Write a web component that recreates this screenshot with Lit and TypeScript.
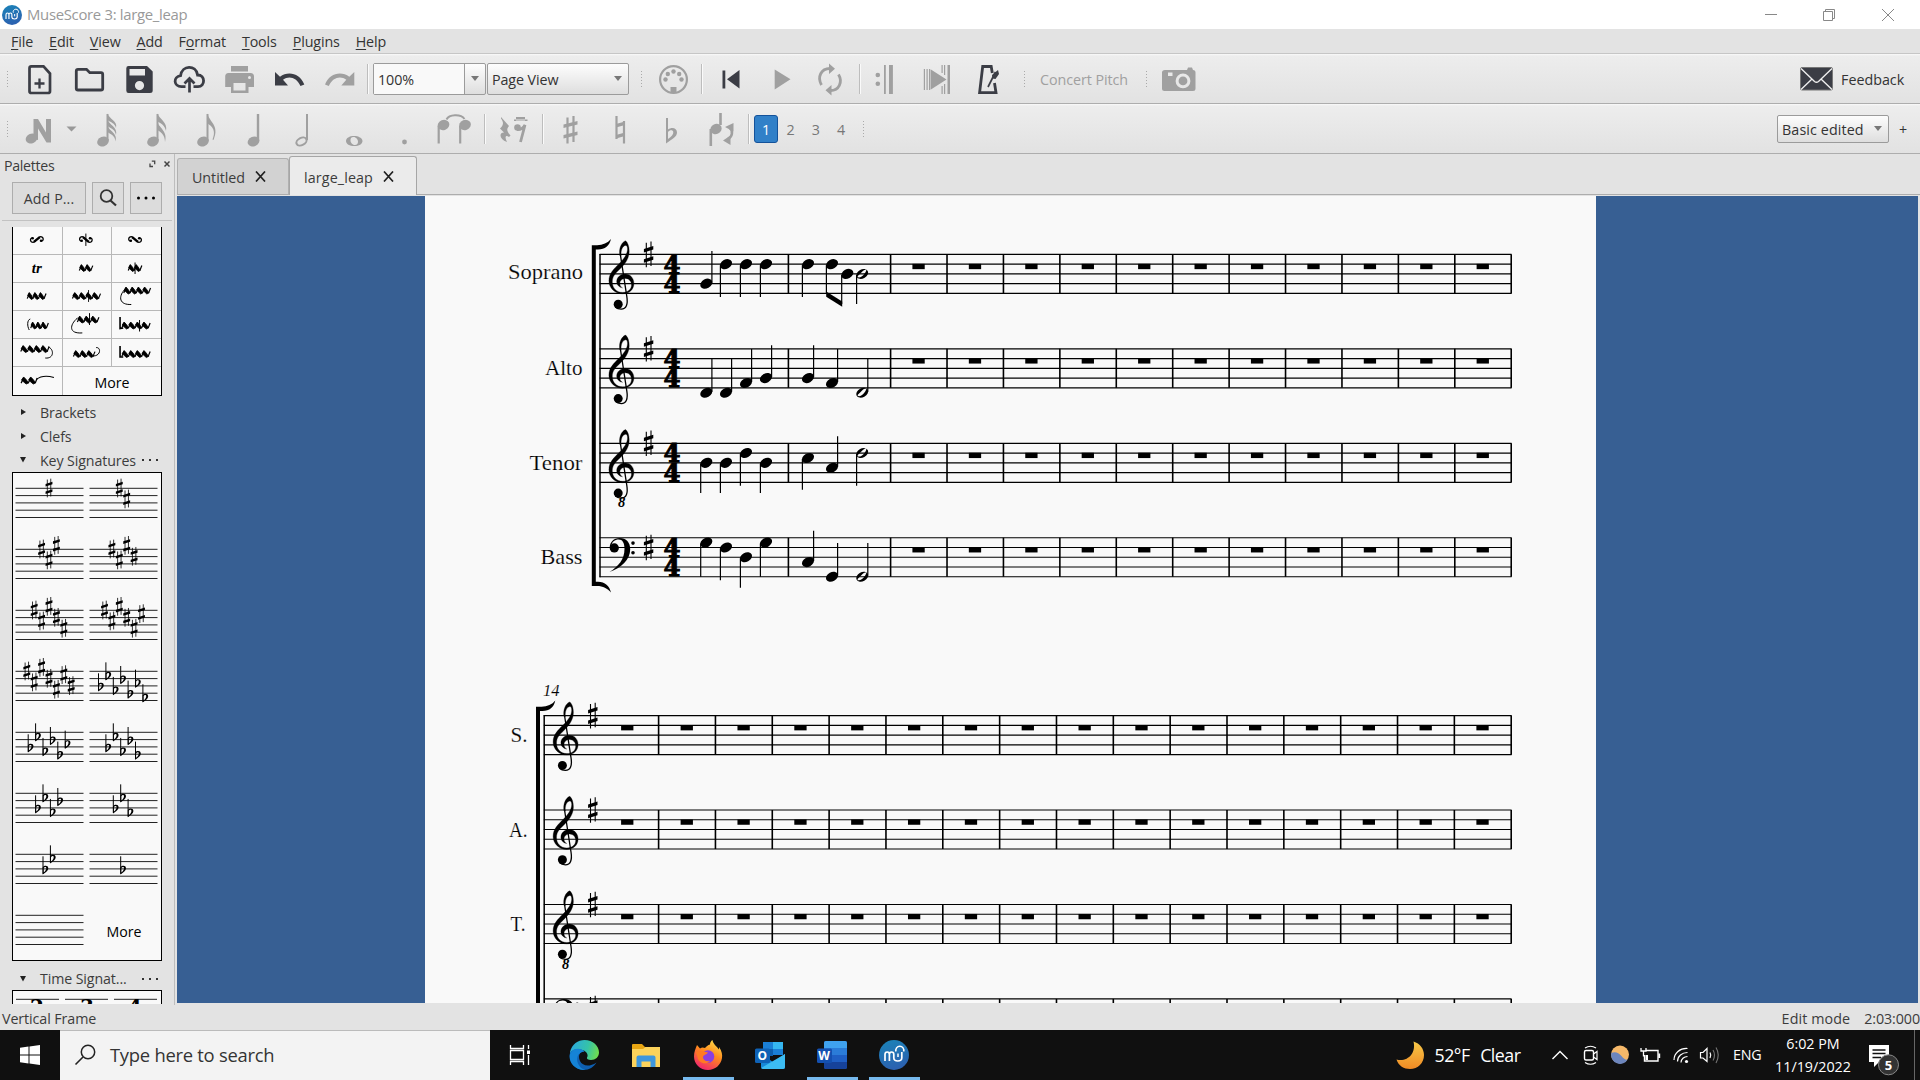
import { LitElement, html, svg, css } from "lit";
import { customElement } from "lit/decorators.js";

const DARK = "#3b3d45";
const GREY = "#a0a0a0";

const icon = (w: number, h: number, content: unknown) =>
  html`<svg class="ic" width=${w} height=${h} viewBox="0 0 ${w} ${h}">${content}</svg>`;
const slot = (content: unknown) => icon(50, 49, content);
const grip = () => html`<span class="grip"></span>`;
const sep = () => html`<span class="sep"></span>`;

/* ---------- music glyphs ---------- */

const sharp = (x: number, y: number, k = 1) => svg`<g transform="translate(${x} ${y}) scale(${k})">
  <path d="M-2.3 -11.6V12.8M2.4 -12.8V11.6" stroke="#000" stroke-width="1.1"/>
  <path d="M-4.7 -3.9L4.7 -6.9V-3.4L-4.7 -.4zM-4.7 6.4L4.7 3.4V6.9L-4.7 9.9z" transform="translate(0 -1.6)"/></g>`;

const flat = (x: number, y: number) => svg`<g transform="translate(${x} ${y})">
  <path d="M-2.3 -12.6V5" stroke="#000" stroke-width="1" fill="none"/>
  <path fill-rule="evenodd" d="M-2.6 -1.6C-.8 -3.8 3 -3.6 3 -.6C3 2 .4 3.6 -2.6 5.6zM-1.7 -.8V3.6C.2 2.2 1 .8 1 -.6C1 -2.4 -.8 -2.2 -1.7 -.8z"/></g>`;

const treble = (x: number, y: number, eight = false) => svg`<g transform="translate(${x} ${y})">
  <path d="M10.9 1C9.8 -5 12 -12 16.7 -13.7C18.8 -12 20.4 -8 20.3 -3C20.2 3.5 17 8.6 12.5 13.2C7 18.6 3.4 21.6 3.4 27.5C3.4 33.5 7.5 38 13.8 38C19 38 22.6 34.8 22.6 30.6C22.6 26.8 20 24 16.4 24C13.2 24 10.9 26.2 10.9 29C10.9 31.2 12 32.4 13.6 33.5C10.5 33.2 7.8 30.6 7.8 27.2C7.8 22.8 11.6 19.6 16.2 19.6C21.4 19.6 25 23.8 25 29C25 35 20.4 39.4 13.6 39.4C6 39.4 0 33.6 0 26.4C0 19 5 14.5 10 9.5C15 4.5 18.6 -.5 18.6 -5.4C18.6 -7.8 17.8 -9.2 16.6 -9C13.5 -8.4 11.7 -4 12.3 1z" stroke="#000" stroke-width=".3"/>
  <path d="M11.5 .4L17.9 42C19.2 50 17.4 54.8 12.3 54.8C10 54.8 8 54.2 6.4 52.6" fill="none" stroke="#000" stroke-width="1.3"/>
  <circle cx="9.3" cy="49.8" r="4.5"/>
  ${eight ? svg`<text x="9" y="64.2" class="oct">8</text>` : null}</g>`;

const bass = (x: number, y: number) => svg`<g transform="translate(${x} ${y})">
  <circle cx="5.1" cy="10.2" r="4.6"/>
  <path d="M.5 10C.6 4.2 4.6 .2 10.5 .2C17 .2 21 4.6 21 11.5C21 22 12 30 .3 34.4C9 28.6 15.3 22 15.3 11C15.3 5 13.3 1.7 9.5 1.7C5.5 1.7 2.6 4 2.2 8z"/>
  <circle cx="23.8" cy="5.4" r="1.8"/><circle cx="23.8" cy="15" r="1.8"/></g>`;

const SP = 9.76;

interface Note { x: number; pos: number; end: number; half?: boolean }

const note = (top: number, n: Note) => {
  const y = top + n.pos * SP;
  const up = n.end < y;
  const sx = up ? n.x + 5.6 : n.x - 5.6;
  return svg`<line x1=${sx} x2=${sx} y1=${y + (up ? -1 : 1)} y2=${n.end} stroke="#000" stroke-width="1.2"/>
  <g transform="translate(${n.x} ${y}) rotate(-28)">${n.half
    ? svg`<path fill-rule="evenodd" d="M-6.3 0A6.3 4.5 0 1 1 6.3 0A6.3 4.5 0 1 1 -6.3 0zM-5.4 .4C-5 2.6 -1 2.2 1.5 1.2C4 .2 5.8 -1.2 5.4 -1.8C4.6 -3 1.5 -2.4 -1 -1.4C-3.6 -.4 -5.4 -.4 -5.4 .4z"/>`
    : svg`<ellipse rx="6.4" ry="4.6"/>`}</g>`;
};

interface Staff { name: string; nx: number; nw: number; ny: number; clef: "t" | "8" | "b"; top: number; notes?: Note[] }

const FIRST: Staff[] = [
  { name: "Soprano", nx: 508, nw: 75, ny: 279.3, clef: "t", top: 254.4, notes: [
    { x: 706.3, pos: 3, end: 251 }, { x: 726, pos: 1, end: 297 }, { x: 746, pos: 1, end: 297 }, { x: 766, pos: 1, end: 297 },
    { x: 808, pos: 1, end: 297 }, { x: 832, pos: 1, end: 294 }, { x: 847.3, pos: 2, end: 304 }, { x: 862.2, pos: 2, end: 304, half: true } ] },
  { name: "Alto", nx: 545, nw: 37.5, ny: 374.7, clef: "t", top: 348.8, notes: [
    { x: 706.3, pos: 4.5, end: 358.7 }, { x: 726, pos: 4.5, end: 358.7 }, { x: 746, pos: 3.5, end: 349 }, { x: 766, pos: 3, end: 345.3 },
    { x: 808, pos: 3, end: 345.3 }, { x: 832, pos: 3.5, end: 349 }, { x: 862.2, pos: 4.5, end: 358.7, half: true } ] },
  { name: "Tenor", nx: 529.5, nw: 53, ny: 470, clef: "8", top: 443.3, notes: [
    { x: 706.3, pos: 2, end: 493 }, { x: 726, pos: 2, end: 493 }, { x: 746, pos: 1, end: 485.7 }, { x: 766, pos: 2, end: 493 },
    { x: 808, pos: 1.5, end: 489.7 }, { x: 832, pos: 2.5, end: 436.3 }, { x: 862.2, pos: 1, end: 485.7, half: true } ] },
  { name: "Bass", nx: 540.5, nw: 42, ny: 564, clef: "b", top: 537.7, notes: [
    { x: 706.3, pos: 0.5, end: 576.7 }, { x: 726, pos: 1, end: 580.3 }, { x: 746, pos: 2, end: 587.7 }, { x: 766, pos: 0.5, end: 576.7 },
    { x: 808, pos: 2.5, end: 530.7 }, { x: 832, pos: 4, end: 543 }, { x: 862.2, pos: 4, end: 543, half: true } ] },
];

const SECOND: Staff[] = [
  { name: "S.", nx: 510.5, nw: 17, ny: 741.7, clef: "t", top: 715.6 },
  { name: "A.", nx: 509, nw: 18.5, ny: 837, clef: "t", top: 810 },
  { name: "T.", nx: 510.5, nw: 15, ny: 931, clef: "8", top: 904.5 },
  { name: "", nx: 510.5, nw: 17, ny: 1026, clef: "b", top: 998.9 },
];

const staff = (s: Staff, left: number, bars: number[], rests: number[]) => svg`
  ${[0, 1, 2, 3, 4].map(i => svg`<line x1=${left} x2="1511.6" y1=${s.top + i * SP} y2=${s.top + i * SP} stroke="#000" stroke-width="1.15"/>`)}
  ${bars.map(b => svg`<line x1=${b} x2=${b} y1=${s.top} y2=${s.top + 4 * SP} stroke="#000" stroke-width="1.6"/>`)}
  ${rests.map(r => svg`<rect x=${r - 6.4} y=${s.top + SP - 0.3} width="12.3" height="5.3"/>`)}
  ${s.name ? svg`<text class="part" x=${s.nx} y=${s.ny} textLength=${s.nw} lengthAdjust="spacingAndGlyphs">${s.name}</text>` : null}
  ${s.clef === "b" ? bass(left + 9.6, s.top) : treble(left + 9.3, s.top, s.clef === "8")}
  ${sharp(left + 49, s.clef === "b" ? s.top + SP : s.top)}
  ${s.notes ? svg`
    <text class="meter" x="663.6" y=${s.top + 2 * SP - 0.4} textLength="17" lengthAdjust="spacingAndGlyphs">4</text>
    <text class="meter" x="663.6" y=${s.top + 4 * SP - 0.4} textLength="17" lengthAdjust="spacingAndGlyphs">4</text>
    ${s.notes.map(n => note(s.top, n))}` : null}`;

const mids = (b: number[]) => b.slice(0, -1).map((v, i) => (v + b[i + 1]) / 2);
const BARS1 = [788.4, ...Array.from({ length: 12 }, (_, i) => 890.6 + i * 56.42)];
const RESTS1 = mids(BARS1.slice(1));
const BARS2 = Array.from({ length: 16 }, (_, i) => 658.6 + i * 56.84);
const RESTS2 = [627.5, ...mids(BARS2)];

@customElement("score-canvas")
class ScoreCanvas extends LitElement {
  static styles = css`
    :host { display: block; width: 1741px; height: 807px; }
    svg { display: block; }
    .part { font: 20.8px "Liberation Serif", serif; stroke: #f9f9f9; stroke-width: .18px; }
    .num { font: italic 16.8px "Liberation Serif", serif; stroke: #f9f9f9; stroke-width: .1px; }
    .meter { font: bold 26px "DejaVu Serif", serif; stroke: #000; stroke-width: 1px; }
    .oct { font: italic bold 14.5px "Liberation Serif", serif; }
  `;
  render() {
    return html`<svg width="1741" height="807" viewBox="177 196 1741 807">
      <rect x="177" y="196" width="1741" height="807" fill="#375f93"/>
      <rect x="425" y="196" width="1171" height="807" fill="#f9f9f9"/>
      ${FIRST.map(s => staff(s, 599.6, BARS1, RESTS1))}
      <path d="M826.2 291.5L842.2 301.5V306.8L826.2 296.8z"/>
      <path d="M600 254V577.2" stroke="#000" stroke-width="1.5"/>
      <path d="M591.8 245.2H597C603 245 607.5 243 611 239C609.5 245.5 605 249.5 598 249.5H595.8V581.7H598C605 581.7 609.5 586 611 592.5C607.5 588.5 603 586 597 586H591.8z"/>
      ${SECOND.map(s => staff(s, 543.8, BARS2, RESTS2))}
      <path d="M544.2 715V1003" stroke="#000" stroke-width="1.5"/>
      <path d="M536 706.8H541.5C547.5 706.6 552 704.5 555.3 700.5C554 707 549.5 711 542.5 711H540V1003H536z"/>
      <text class="num" x="543" y="696" textLength="16.5" lengthAdjust="spacingAndGlyphs">14</text>
    </svg>`;
  }
}

/* ---------- palettes ---------- */

const wave = (x: number, y: number, n: number, w = 6.6) => svg`${Array.from({ length: n }, (_, i) => {
  const a = x + i * w;
  return svg`<path d="M${a} ${y + 2.6}L${a + w * 0.38} ${y - 2.8}" stroke="#000" stroke-width="1.2"/>
  <path d="M${a + w * 0.36} ${y - 3.5}L${a + w * 0.72} ${y - 0.9}L${a + w * 1.06} ${y + 2.4}L${a + w * 0.72} ${y + 3.5}L${a + w * 0.06} ${y - 0.4}z" stroke="#000" stroke-width=".8"/>`;
})}<path d="M${x + n * w} ${y + 2.4}L${x + n * w + 2} ${y - 2.4}" stroke="#000" stroke-width="1.2"/>`;
const curve = (d: string, w = 1) => svg`<path d=${d} fill="none" stroke="#000" stroke-width=${w}/>`;
const turn = (x: number, flip = false) => svg`<g transform="translate(${x} 239.5) scale(${flip ? -1 : 1} 1)">
  ${curve("M-4.3 1.6C-7.4 1.4 -6.8 -2.9 -3.6 -2.9C-.8 -2.9 .8 2.9 3.6 2.9C6.8 2.9 7.4 -1.4 4.3 -1.6", 1.3)}
  ${curve("M-3 -2.4L3 2.4", 2.3)}
  <circle cx="-4.2" cy="1.2" r="1.3"/><circle cx="4.2" cy="-1.2" r="1.3"/></g>`;

const ORNAMENTS: unknown[] = [
  turn(36.6, true), svg`${turn(85.6)}${curve("M85.6 233.5V246", 1)}`, turn(134.8),
  svg`<text class="tr" x="31.5" y="273">tr</text>`, wave(79, 268, 2, 5.8), svg`${wave(128, 268, 2, 5.8)}${curve("M134.8 262.5V274", 1)}`,
  wave(27, 296, 3, 5.6), svg`${wave(72, 296, 4)}${curve("M88.3 290V302", 0.9)}`, svg`${wave(123.5, 290.5, 4, 6.2)}${curve("M124 290C118 297 119 305 131 304.5")}`,
  svg`${wave(30.5, 325.5, 3, 5.2)}${curve("M30 319C26.8 320 26.8 326 29 330")}`, svg`${wave(77, 319.5, 3)}${curve("M77 318C69 325 68 334 82 333")}${curve("M89.3 313V325")}`, svg`${wave(121.5, 325.5, 4)}${curve("M119.8 317V328.5L123 328", 1.6)}${curve("M139.3 320V331.5")}`,
  svg`${wave(20.5, 349, 4)}${curve("M48 347C54 349 54 359 45 358")}`, svg`${wave(73, 354, 3)}${curve("M93 356C101 356 101 347 96 347.5")}`, svg`${wave(121.5, 354, 4)}${curve("M119.8 346V357L123 357", 1.6)}`,
  svg`${wave(21, 380, 2, 7)}${curve("M36 379C41 375 47 375 53.5 377", 1)}`,
];

const SHARP_POS = [0, 1.5, -0.5, 1, 2.5, 0.5, 2];
const FLAT_POS = [2, 0.5, 2.5, 1, 3, 1.5, 3.5];
const KEYS = [1, 2, 3, 4, 5, 6, 7, -7, -6, -5, -4, -3, -2, -1, 0];

const keySig = (k: number) => {
  const n = Math.abs(k);
  return html`<svg class="key" width="74" height="60" viewBox="0 0 74 60">
    ${[0, 1, 2, 3, 4].map(i => svg`<line x1="2.5" x2="70.5" y1=${15.3 + i * 7.3} y2=${15.3 + i * 7.3} stroke="#222" stroke-width="1"/>`)}
    ${Array.from({ length: n }, (_, i) => {
      const x = 36 + (i - (n - 1) / 2) * 7.4;
      return k > 0 ? sharp(x, 15 + SHARP_POS[i] * 7.3, 0.73) : flat(x, 15.3 + FLAT_POS[i] * 7.3);
    })}
  </svg>`;
};

@customElement("palette-panel")
class PalettePanel extends LitElement {
  static styles = css`
    :host { display: flex; flex-direction: column; width: 174px; height: 851px; overflow: hidden; font: 14.2px "Open Sans", sans-serif; color: #3c3c3c; border-right: 1px solid #bdbdbd; }
    :host > * { flex: none; }
    svg { display: block; }
    .head { display: flex; align-items: center; height: 22px; padding: 0 4px 0 4px; letter-spacing: -.3px; }
    .head span { flex: 1; }
    .head svg { margin-top: -3px; }
    .btns { display: flex; gap: 6px; padding: 6px 12px 0; height: 32px; }
    .btns > span { box-sizing: border-box; height: 32px; border: 1px solid #adadad; background: #dcdcdc; display: flex; align-items: center; justify-content: center; }
    .btns .add { width: 74px; letter-spacing: .1px; padding-top: 1px; }
    .sq { width: 32px; }
    .rule { height: 1px; background: #c2c2c2; margin: 6px 2px; }
    .orn { margin-left: 12px; display: grid; grid-template-columns: 49px 48px 49px; grid-template-rows: repeat(5, 27px) 28px; gap: 1px; border: 1px solid #000; border-top: 0; background: #b8b8b8; height: 168px; width: 148px; }
    .orn > * { background: #f9f9f9; }
    .orn svg { width: 100%; height: 100%; }
    .tr { font: italic bold 15px "Liberation Serif", serif; }
    .more { display: flex; align-items: center; justify-content: center; color: #000; background: #f9f9f9; }
    .orn .more { grid-column: span 2; padding-top: 2px; }
    .keys .more { padding-top: 2px; }
    .cat { display: flex; align-items: center; height: 24px; padding-left: 20px; letter-spacing: -.1px; }
    .cat svg { margin-right: 14px; }
    .cat .dots { margin: 0 16px 0 auto; }
    .gap { height: 4px; }
    .keys { width: 148px; height: 487px; margin-left: 12px; border: 1px solid #000; background: #f9f9f9; display: grid; grid-template-columns: 74px 74px; grid-template-rows: repeat(7, 61px) 60px; }
    .sigs { width: 148px; height: 13px; margin: -1px 0 0 12px; border: 1px solid #000; border-bottom: 0; background: #f9f9f9; overflow: hidden; }
    .sig { font: bold 20px "DejaVu Serif", serif; }
    .time { height: 30px; box-sizing: border-box; padding-top: 5px; }
  `;
  private dots() { return html`<svg class="dots" width="16" height="4" viewBox="0 0 16 4"><path d="M0 1h2v2H0zM7 1h2v2H7zM14 1h2v2h-2z" fill="#333"/></svg>`; }
  private arrow(open: boolean) { return html`<svg width="6" height="8" viewBox="0 0 6 8"><path d=${open ? "M0 1H6L3 6.5z" : "M1 1V7L6 4z"} fill="#222"/></svg>`; }
  render() {
    return html`
      <div class="head"><span>Palettes</span>
        <svg width="21" height="8" viewBox="0 0 21 8"><path d="M2.8 1.2H5.7V4.2M4 6.5H1V3.5" stroke="#444" stroke-width="1.3" fill="none"/><path d="M15.5 1.5l5 5m0-5l-5 5" stroke="#444" stroke-width="1.5"/></svg>
      </div>
      <div class="btns"><span class="add">Add P...</span>
        <span class="sq"><svg width="20" height="20" viewBox="0 0 20 20"><circle cx="8.5" cy="8" r="5.8" fill="none" stroke="#333" stroke-width="1.8"/><path d="M12.5 12.5L18 17.5" stroke="#333" stroke-width="2.2"/></svg></span>
        <span class="sq"><svg width="20" height="4" viewBox="0 0 20 4"><circle cx="2.5" cy="2" r="1.5"/><circle cx="10" cy="2" r="1.5"/><circle cx="17.5" cy="2" r="1.5"/></svg></span>
      </div>
      <div class="rule"></div>
      <div class="orn">
        ${ORNAMENTS.map((o, i) => html`<svg viewBox="${13 + (i % 3) * 49.5} ${227 + Math.floor(i / 3) * 28} 48.5 27">${o}</svg>`)}
        <div class="more">More</div>
      </div>
      <div class="gap"></div>
      <div class="cat">${this.arrow(false)}Brackets</div>
      <div class="cat">${this.arrow(false)}Clefs</div>
      <div class="cat">${this.arrow(true)}Key Signatures${this.dots()}</div>
      <div class="keys">${KEYS.map(keySig)}<div class="more">More</div></div>
      <div class="cat time">${this.arrow(true)}Time Signat...${this.dots()}</div>
      <div class="sigs"><svg width="148" height="40" viewBox="13 991 148 40">
        ${[16, 65, 114].map(x => svg`<path d="M${x} 999.3h43" stroke="#222" stroke-width="1"/>`)}
        <text class="sig" x="30" y="1014" textLength="12">2</text><text class="sig" x="80" y="1014" textLength="12">3</text><text class="sig" x="128" y="1014" textLength="12">4</text>
      </svg></div>`;
  }
}

/* ---------- toolbars ---------- */

const noteHead = (x: number, y: number) => svg`<ellipse cx=${x} cy=${y} rx="6" ry="4.8" transform="rotate(-22 ${x} ${y})" fill=${GREY}/>`;
const g = (d: string, w = 2) => svg`<path d=${d} fill="none" stroke=${GREY} stroke-width=${w}/>`;
const f = (d: string, c = GREY) => svg`<path fill-rule="evenodd" d=${d} fill=${c}/>`;

const FILE_ICONS = [
  svg`<path d="M16.5 12.3H29.5L36 19.5V37.2Q36 39 34 39H17.5Q15.5 39 15.5 37.2V14.2Q15.5 12.3 17.5 12.3z" fill="none" stroke=${DARK} stroke-width="2.7"/><path d="M25.5 24.5V34.5M20.5 29.5H30.5" stroke=${DARK} stroke-width="2.3"/>`,
  svg`<path d="M12.3 17.2Q12.3 15.3 14 15.3H22.5L25.8 18.7H37Q38.7 18.7 38.7 20.4V34.5Q38.7 36 37 36H14Q12.3 36 12.3 34.5z" fill="none" stroke=${DARK} stroke-width="2.8"/>`,
  f("M14.5 12H33L38.7 17.5V36.5Q38.7 39 36 39H14.5Q12.3 39 12.3 36.5V14.2Q12.3 12 14.5 12zM15.5 15V21.5H31V15zM25.5 27A4.6 4.6 0 1 0 25.5 36.2A4.6 4.6 0 1 0 25.5 27z", DARK),
  svg`<path d="M21.5 32.6H17.5C9.5 32.5 8.8 22.8 16.6 21.6C18 10.8 32 10.6 33.6 21C41.5 21 41.5 32.6 34 32.6H29.5" fill="none" stroke=${DARK} stroke-width="2.8"/><path d="M25.5 38.5V25.5M20.5 29.5L25.5 24.5L30.5 29.5" fill="none" stroke=${DARK} stroke-width="2.7"/>`,
  f("M17 12H34V17.5H17zM14.5 19H36.5Q40 19 40 22.5V33H34.5V39H17V33H11.2V22.5Q11.2 19 14.5 19zM19.5 29V36.5H31.5V29zM35.5 22A1.5 1.5 0 1 0 35.5 25A1.5 1.5 0 1 0 35.5 22z"),
  f("M11 18L16 22.7C24 16.5 36 19 40.3 30.5L36.5 32C32.5 23.5 25 21.5 19 25.8L24 31.5H11z", DARK),
  f("M40.3 18L35.3 22.7C27.3 16.5 15.3 19 11 30.5L14.8 32C18.8 23.5 26.3 21.5 32.3 25.8L27.3 31.5H40.3z"),
];

const PLAY1 = [
  svg`<path d="M16.5 16.5h2.8v18h-2.8z" fill=${DARK}/><path d="M33.5 16V34.5L21 25.2z" fill=${DARK}/>`,
  f("M18.7 15.5L34.5 25.3L18.7 35.5z"),
  svg`${g("M15.5 31C11 23 15 14.5 24 14.5M32.5 20.5C37 28 33 36.5 24.5 36.5", 2.8)}${f("M23 9.5L29 14.7L23 20zM25.5 31L19.5 36.3L25.5 41.5z")}`,
];
const PLAY2 = [
  svg`<circle cx="13.8" cy="21" r="2.3" fill=${GREY}/><circle cx="13.8" cy="29.7" r="2.3" fill=${GREY}/>${f("M20 11h1.8v29H20zM25 11h3.9v29H25z")}`,
  f("M9.8 15h1.2v21h-1.2zM12.5 15h1.2v21h-1.2zM15 15h1v21h-1zM16.5 15.3L32.5 25.5L16.5 35.8zM27.5 11h1.2v8h-1.2zM30 11h1.2v10H30zM33.5 11h2.5v29h-2.5zM27.5 32h1.2v8h-1.2zM30 30h1.2v10H30z"),
  svg`<path d="M28.3 19L27.2 12.5H18.7L15.6 38.7H32L30.5 29" fill="none" stroke=${DARK} stroke-width="2.8"/><path d="M24 33L31.5 18" stroke=${DARK} stroke-width="1.7"/><path d="M28 21L34 16L35 20L31.5 25L28.5 24.5z" fill=${DARK}/>`,
];

const DURATIONS = [
  svg`${noteHead(21, 37.5)}${g("M25.5 10V37", 2)}${f("M25.5 9.5C27 15 36 17 34 24C33 19 28 18 25.5 16zM25.5 15.5C27 21 36 23 34 31C33 25 28 24 25.5 22zM25.5 21.5C27 27 36 29 33.5 37.5C33 31 28 30 25.5 28z")}`,
  svg`${noteHead(21, 37.5)}${g("M25.5 10V37", 2)}${f("M25.5 9.5C27 15 36 18 34 27C33 21 28 19 25.5 17.5zM25.5 18C27 24 36 27 33 38C33 30 28 28 25.5 26z")}`,
  svg`${noteHead(21, 37.5)}${g("M25.5 10V37", 2)}${f("M25.5 9.5C27 18 38 21 31.5 36L30.5 35.5C35 25 28 21 25.5 19.5z")}`,
  svg`${noteHead(21.5, 37.5)}${g("M26 10V37", 2.4)}`,
  svg`<ellipse cx="19.5" cy="37.5" rx="5.4" ry="3.6" transform="rotate(-28 19.5 37.5)" fill="none" stroke=${GREY} stroke-width="2"/>${g("M25 10V36", 2)}`,
  svg`${f("M14 37C14 34 17.5 32 22 32S30.5 34 30.5 37S27 42 22.3 42S14 40 14 37zM18.5 36.5C18.5 39 21 41 23 41S26 39.5 26 37.5S24 33 21.5 33S18.5 34.5 18.5 36.5z")}`,
  svg`<circle cx="22.5" cy="38" r="2.4" fill=${GREY}/>`,
  svg`${g("M14.5 15.5C17 10.5 28.5 9.5 32.5 15", 2)}<ellipse cx="11.5" cy="21" rx="6" ry="5" transform="rotate(-22 11.5 21)" fill=${GREY}/><ellipse cx="33" cy="21" rx="6" ry="5" transform="rotate(-22 33 21)" fill=${GREY}/>${g("M6.7 22V39.5M28.2 22V39.5", 2.2)}`,
];
const rest = svg`${f("M13 13L21 22C18.5 25 18.5 27 22.5 31.5L21 33C17.5 30.5 16.5 33 19 38C11.5 35.5 10.5 28.5 16 28.5L12 24.5C15.5 21.5 16 18.5 13 14.5zM28 13h9v3.5h-9zM26 15.5h13.5v1.6H26z")}<circle cx="29.5" cy="23.5" r="3.3" fill=${GREY}/>${g("M29 25.5Q34 26 37 21L32.5 38", 2.8)}`;
const ACCIDENTALS = [
  svg`${g("M21.5 13.5V39.5M27.5 12V38", 2.2)}${f("M17.5 20.5L31.5 17V20.5L17.5 24zM17.5 31L31.5 27.5V31L17.5 34.5z")}`,
  svg`${g("M20.5 12V35M28 17V39.5", 2.2)}${f("M20 20L29 17.5V21L20 23.5zM20 31L29 28.5V32L20 34.5z")}`,
  svg`${f("M20 14H22V25.5C26 22.5 31 24 31 28.5C31 33 26 35 20 39.5zM22 28V35C25.5 32.5 27.5 30.5 27.3 28C27 25.5 23.5 25.5 22 28z")}`,
  svg`<ellipse cx="20" cy="25" rx="5.8" ry="5" transform="rotate(-25 20 25)" fill=${GREY}/>${g("M14.8 25V42M24.5 9V21", 2.6)}${g("M33.5 23.5C37.5 27 36.5 33 31.5 35.5", 2.6)}${f("M29 23L37.5 19V27.5zM27 36.5L34.5 31.5V41z")}`,
];

const drop = () => html`<svg class="drop" width="8" height="5" viewBox="0 0 8 5"><path d="M0 0H8L4 5z" fill="#777"/></svg>`;
const mu = (s: number) => html`<svg width=${s} height=${s} viewBox="0 0 30 30"><defs><linearGradient id="mg" x1="0" y1="0" x2=".3" y2="1"><stop offset="0" stop-color="#1a84b8"/><stop offset="1" stop-color="#2b62b0"/></linearGradient></defs>
  <circle cx="15" cy="15" r="15" fill="url(#mg)"/><path d="M5 21V14.5Q5 12 7.2 12T9.4 14.5V21M9.4 14.5Q9.4 12 11.6 12T13.8 14.5V18Q14 21 17.8 21T21.800 18V12" fill="none" stroke="#fff" stroke-width="1.7" transform="translate(1 0)"/><path d="M19 17V13.5" stroke="#fff" stroke-width="1.5"/><path d="M17 11.5A4 4 0 1 1 24.6 11.5" fill="none" stroke="#fff" stroke-width="1.5"/></svg>`;

@customElement("app-toolbars")
class AppToolbars extends LitElement {
  static styles = css`
    :host { display: block; font: 14.3px "Open Sans", sans-serif; color: #333; }
    svg { display: block; flex: none; }
    .title { height: 29px; background: #fff; display: flex; align-items: center; padding-left: 2px; color: #999; font-size: 14.9px; letter-spacing: -.31px; }
    .title .name { padding: 0 0 2px 5px; flex: 1; }
    .menu { height: 24px; background: #e3e3e3; display: flex; padding-left: 11px; line-height: 25px; border-bottom: 1px solid #c6c6c6; letter-spacing: -.12px; }
    .menu span { margin-right: 15.9px; }
    .menu u { text-underline-offset: 2px; text-decoration-thickness: 1px; }
    .bar { height: 49px; background: linear-gradient(#fafafa 0, #ededed 2px, #e2e2e2); border-bottom: 1px solid #adadad; display: flex; align-items: center; padding-left: 6px; }
    .grip { width: 4px; height: 17px; flex: none; background: radial-gradient(circle, #aaa 0 .7px, transparent .9px) 0 0 / 3px 3px; }
    .sep { width: 1px; height: 30px; flex: none; background: #bdbdbd; border-right: 1px solid #fafafa; margin: 0 3px; }
    .notes .sep { margin: 0 2px; }
    .combo { box-sizing: border-box; border: 1px solid #9b9b9b; border-radius: 2px; background: linear-gradient(#fdfdfd, #dedede); display: flex; align-items: center; flex: none; letter-spacing: -.1px; }
    .zoom { width: 113px; height: 32px; margin: 0 1px 0 1px; }
    .zoom .val { width: 91px; height: 30px; line-height: 29px; box-sizing: border-box; padding-left: 4px; background: #f9f9f9; border-right: 1px solid #9b9b9b; }
    .zoom .drop { margin-left: 6px; }
    .view { width: 142px; height: 32px; padding: 0 6px 0 4px; justify-content: space-between; }
    .ws { width: 112px; height: 28px; padding: 0 6px 0 4px; justify-content: space-between; margin-left: auto; letter-spacing: .1px; }
    .combo span { padding-top: 1px; }
    .file { display: flex; padding-left: 4px; }
    .g1 { display: flex; margin: 0 4px 0 11px; }
    .g2 { margin: 0 13px 0 9px; display: flex; } .g3 { margin: 0 0 0 18px; display: flex; }
    .pitch { color: #a0a0a0; width: 87px; letter-spacing: -.06px; white-space: nowrap; padding-top: 1px; }
    .mail { margin: 0 8px 0 auto; } .fb { width: 79px; padding-top: 1px; }
    .v1 { box-sizing: border-box; width: 24px; height: 28px; border: 1px solid #14529a; border-radius: 3px; background: #3180c8; color: #fff; text-align: center; line-height: 27px; margin-left: 2px; }
    .v { width: 25.2px; text-align: center; color: #777; padding-top: 1px; }
    .plus { width: 31px; text-align: center; box-sizing: border-box; padding: 1px 3px 0 0; }
    .g4 { margin-left: 8px; display: flex; }
  `;
  render() {
    const menus = ["File", "Edit", "View", "Add", "Format", "Tools", "Plugins", "Help"];
    return html`
      <div class="title">${mu(20)}<span class="name">MuseScore 3: large_leap</span>
        <svg width="160" height="28" viewBox="0 0 160 28"><path d="M5 13.5H17M63.5 10.5H72.5V19.5H63.5zM65.5 10V8.5H74.5V17.5H73M122 8l12 12m0-12l-12 12" fill="none" stroke="#888" stroke-width="1"/></svg>
      </div>
      <div class="menu">${menus.map(m => m === "Format" ? html`<span>F<u>o</u>rmat</span>` : html`<span><u>${m[0]}</u>${m.slice(1)}</span>`)}</div>
      <div class="bar">${grip()}<span class="file">${FILE_ICONS.map(slot)}</span>${sep()}
        <span class="combo zoom"><span class="val">100%</span>${drop()}</span>
        <span class="combo view"><span>Page View</span>${drop()}</span>
        <span class="g1">${grip()}</span>
        ${slot(svg`<circle cx="25.5" cy="25.5" r="13.4" fill="none" stroke=${GREY} stroke-width="2.2"/><g fill=${GREY}><circle cx="17.5" cy="25.5" r="2.2"/><circle cx="19.8" cy="20" r="2.2"/><circle cx="25.5" cy="17.5" r="2.2"/><circle cx="31.2" cy="20" r="2.2"/><circle cx="33.5" cy="25.5" r="2.2"/><path d="M22.5 33H28.5V39H22.5z"/></g>`)}
        ${sep()}${PLAY1.map(slot)}${sep()}${PLAY2.map(slot)}
        <span class="g2">${grip()}</span><span class="pitch">Concert Pitch</span><span class="g3">${grip()}</span>
        ${icon(60, 49, f("M16 16H38L39 13.5H43L44 16Q46.5 16 46.5 18.5V34.5Q46.5 37 44 37H15.5Q13 37 13 34.5V18.5Q13 16 16 16zM19 18.5V22H23.5V18.5zM34 19.5A7.4 7.4 0 1 0 34 34.3A7.4 7.4 0 1 0 34 19.5zM34 22.5A4.4 4.4 0 1 1 34 31.3A4.4 4.4 0 1 1 34 22.5z"))}
        <svg class="mail" width="33" height="24" viewBox="0 0 33 24"><rect x=".5" y=".5" width="32" height="22.5" rx="1.5" fill=${DARK} stroke="#777"/><path d="M1 1.5L14.5 14.5Q16.5 16 18.5 14.5L32 1.5M1 22.5L12 12M32 22.5L21 12" fill="none" stroke="#eee" stroke-width="1.4"/></svg>
        <span class="fb">Feedback</span>
      </div>
      <div class="bar notes">${grip()}
        ${icon(72, 49, svg`<path d="M23.5 35V15H28L36 28.5V15H41V38.5H36.5L28 24.5V36z" fill=${GREY}/><ellipse cx="21.5" cy="34.5" rx="6" ry="4.8" transform="rotate(-22 21.5 34.5)" fill=${GREY}/><path d="M56.5 22.5H66.5L61.5 27.5z" fill="#999"/>`)}
        ${DURATIONS.map(slot)}${sep()}${icon(52, 49, rest)}${sep()}${ACCIDENTALS.map(slot)}${sep()}
        <span class="v1">1</span><span class="v">2</span><span class="v">3</span><span class="v">4</span><span class="g4">${grip()}</span>
        <span class="combo ws"><span>Basic edited</span>${drop()}</span><span class="plus">+</span>
      </div>`;
  }
}

/* ---------- taskbar ---------- */

@customElement("task-bar")
class TaskBar extends LitElement {
  static styles = css`
    :host { display: flex; height: 50px; background: #101010; color: #fff; font: 14.3px "Open Sans", sans-serif; }
    svg { display: block; flex: none; }
    .start { width: 60px; display: flex; align-items: center; justify-content: center; }
    .search { box-sizing: border-box; width: 430px; background: #f3f3f3; border-top: 1px solid #bbb; display: flex; align-items: center; padding: 0 0 2px 14px; gap: 14px; color: #333; font-size: 18.4px; letter-spacing: -.26px; }
    .view { width: 62px; padding-left: 19px; box-sizing: border-box; display: flex; align-items: center; }
    .app { width: 51px; height: 50px; margin-right: 11px; box-sizing: border-box; display: flex; align-items: center; justify-content: center; border-bottom: 3px solid transparent; padding-top: 3px; }
    .on { border-color: #76b9ed; }
    .apps { display: flex; padding-left: 6.5px; flex: 1; }
    .weather { display: flex; align-items: center; font-size: 17.8px; letter-spacing: -.5px; gap: 10.5px; width: 156px; white-space: nowrap; }
    .weather span { padding-bottom: 1px; }
    .lang { width: 42px; padding-left: 0; box-sizing: border-box; line-height: 50px; letter-spacing: -.2px; }
    .clock { width: 76px; text-align: center; line-height: 23px; padding-top: 2px; }
    .note { margin-left: 18px; }
    .n { font: bold 13px "Open Sans", sans-serif; }
    .end { width: 5px; border-left: 1px solid #666; margin-left: 13px; }
    .l { font: bold 12px "Open Sans", sans-serif; }
  `;
  render() {
    return html`
      <div class="start"><svg width="20" height="20" viewBox="0 0 20 20"><path d="M0 2.8L8.5 1.6V9.5H0zM9.5 1.4L20 0V9.5H9.5zM0 10.5H8.5V18.4L0 17.2zM9.5 10.5H20V20L9.5 18.6z" fill="#fff"/></svg></div>
      <div class="search"><svg width="22" height="22" viewBox="0 0 22 22"><circle cx="14" cy="8" r="6.7" fill="none" stroke="#222" stroke-width="1.5"/><path d="M9 13L1.5 20.5" stroke="#222" stroke-width="1.6"/></svg>Type here to search</div>
      <div class="view"><svg width="22" height="20" viewBox="0 0 22 20"><path d="M1.5 0V3.5H14.5V0M1.5 20V16.5H14.5V20M1.5 5.5H14.5V14.5H1.5zM19.5 0V4M19.5 10V20" fill="none" stroke="#fff" stroke-width="1.3"/><path d="M18 5.5h3v3.5h-3z" fill="#fff"/></svg></div>
      <div class="apps">
        <div class="app"><svg width="30" height="30" viewBox="0 0 30 30"><defs><linearGradient id="e1" x1="0" y1=".3" x2="1" y2=".5"><stop offset="0" stop-color="#2aa8e0"/><stop offset=".6" stop-color="#35c3a8"/><stop offset="1" stop-color="#6fdc50"/></linearGradient></defs>
          <path d="M1 12C3 4 9 0 15.5 0C24 0 30 6 30 12.5C30 17 26.5 20 22 20C19 20 17.5 19 18 17.5C20 15 17 10 12 10C6 10 2 14 1 18z" fill="url(#e1)"/><path d="M1 13C4 8.5 11 7.5 15.5 11.5C11 11 8.5 16 11 21C13.5 26 20 27.5 27.5 22.5C25 27 20 30 15 30C6 30 -1 22 1 13z" fill="#0f5fb0"/><path d="M1 14C4 8 11 7 15.5 11.5C9.5 11.5 6.5 18 9 23.5C10.5 27 13 29 16 30C6 30.5 -1 22 1 14z" fill="#1583d6"/></svg></div>
        <div class="app"><svg width="30" height="25" viewBox="0 0 30 25"><path d="M1 2Q1 1 2 1H11L14 4H27Q29 4 29 6V22Q29 24 27 24H1z" fill="#e8a512"/><path d="M1 6H12L14.5 4H29V24H1z" fill="#fcd35b"/><path d="M5.5 24V14.5Q5.5 12.5 7.5 12.5H22.5Q24.5 12.5 24.5 14.5V24H19.5V18.5H10.5V24z" fill="#3e97dd"/></svg></div>
        <div class="app on"><svg width="30" height="30" viewBox="0 0 30 30"><defs><linearGradient id="f1" x1=".8" y1="0" x2=".3" y2="1"><stop offset="0" stop-color="#ffe14a"/><stop offset=".45" stop-color="#ff8a1e"/><stop offset="1" stop-color="#f0246e"/></linearGradient></defs>
          <path d="M4 5L7 8.5C9 7 10.5 7.5 12 8C13 6.5 15 5 17 4.5C17 2.5 18 1 19.5 0C20 4 24 6.5 26 9.5V7C29 11 29.5 15 29 18C28 25 22 30 15 30C7 30 1 24 1 16.5C1 12 2.5 9 4 5z" fill="url(#f1)"/><circle cx="15" cy="16.5" r="6.3" fill="#8a3fe0"/><path d="M3 12C8 10 10 11.5 15 12.5C13.5 15 10.5 14.5 10 17C10 20 13 22 17 21C13 25.5 5 23 4.5 17z" fill="#ff7a22"/></svg></div>
        <div class="app"><svg width="30" height="28" viewBox="0 0 30 28"><path d="M8 1H28V14H8z" fill="#1a7fd6"/><path d="M18 1H28V8H18z" fill="#35b6f0"/><path d="M8 8H18V15H8z" fill="#0d5fae"/><path d="M6 13L18 21L30 13V26Q30 28 28 28H8Q6 28 6 26z" fill="#1688d8"/><path d="M6 27L30 13V26Q30 28 28 28H8z" fill="#3cbcf2"/><rect y="7.5" width="15" height="14.5" rx="1.5" fill="#0f62b6"/><text class="l" x="2.6" y="19.2" fill="#fff">O</text></svg></div>
        <div class="app on"><svg width="30" height="28" viewBox="0 0 30 28"><rect x="7" y="0" width="23" height="28" rx="2" fill="#1f5fc4"/><path d="M7 7V2Q7 0 9 0H28Q30 0 30 2V7z" fill="#3fa2ef"/><path d="M7 7H30V14H7z" fill="#2b7cd8"/><path d="M7 21H30V26Q30 28 28 28H9Q7 28 7 26z" fill="#16429a"/><rect y="7.5" width="15" height="14.5" rx="1.5" fill="#1450b0"/><text class="l" x="1.2" y="19.2" fill="#fff">W</text></svg></div>
        <div class="app on">${mu(30)}</div>
      </div>
      <div class="weather"><svg width="28" height="28" viewBox="0 0 28 28"><defs><linearGradient id="m1" x1=".5" y1="0" x2=".5" y2="1"><stop offset="0" stop-color="#f7c948"/><stop offset="1" stop-color="#f08a24"/></linearGradient></defs><path d="M17.5 .5C24 2.5 28 8 28 14C28 22 22 28 14 28C8 28 2.5 25 .5 18.5C11 21.5 20.5 12.5 17.5 .5z" fill="url(#m1)"/></svg><span>52°F</span><span>Clear</span></div>
      <svg width="181" height="50" viewBox="1552 1030 181 50" fill="none" stroke="#fff" stroke-width="1.4">
        <path d="M1552.5 1059L1560 1051.5L1567.5 1059"/>
        <rect x="1584.5" y="1050.5" width="9" height="9.5" rx="1.5"/><path d="M1593.5 1054L1597 1051.5V1059.5L1593.5 1057M1585 1048Q1590.5 1044.5 1596 1048M1585 1062.5Q1590.5 1066 1596 1062.5" stroke-width="1.2"/>
        <circle cx="1620" cy="1054.5" r="9" fill="#f5b869" stroke="none"/><path d="M1611.2 1053Q1617 1050.5 1621.5 1056T1628 1059A9 9 0 0 1 1611.2 1053z" fill="#6d86bd" stroke="none"/>
        <path d="M1645.5 1050.5H1658V1061H1644.5V1055M1659.5 1053.5V1058" stroke-width="1.4"/><path d="M1641 1048V1051H1646V1048M1643.5 1051V1056.5" stroke-width="1.3"/><path d="M1645.5 1055H1648V1060H1645.5z" fill="#fff" stroke="none"/>
        <path d="M1674 1060C1674 1053 1680 1048 1687.5 1048.5M1677.5 1061.5C1677.5 1056 1682 1052.5 1687.5 1052.5M1681 1062.5C1681 1059 1684 1056.5 1687.5 1056.5" stroke-width="1.2"/><circle cx="1686.5" cy="1061.5" r="1.6" fill="#fff" stroke="none"/>
        <path d="M1700.5 1052.5H1703L1707 1048.5V1061.5L1703 1058H1700.5z" stroke-width="1.2"/><path d="M1710 1052.5Q1711.5 1055 1710 1058" stroke-width="1.2"/><path d="M1713 1050Q1716 1055 1713 1060.5M1716 1047.5Q1720.5 1055 1716 1063" stroke="#777" stroke-width="1.1"/>
      </svg>
      <div class="lang">ENG</div>
      <div class="clock">6:02 PM<br>11/19/2022</div>
      <svg class="note" width="32" height="50" viewBox="0 0 32 50"><path d="M0 15H20V32H10L5 37V32H0z" fill="#fff"/><path d="M3.5 20H16.5M3.5 23.5H16.5M3.5 27.5H12" stroke="#111" stroke-width="1.3"/><circle cx="19.5" cy="34.8" r="10" fill="#333" stroke="#888"/><text class="n" x="15.7" y="39.6" fill="#fff">5</text></svg>
      <div class="end"></div>`;
  }
}

@customElement("app-root")
class AppRoot extends LitElement {
  static styles = css`
    :host { display: block; width: 1920px; height: 1080px; overflow: hidden; background: #e3e3e3; font: 14.3px "Open Sans", sans-serif; color: #3c3c3c; }
    .main { display: flex; height: 851px; }
    .work { padding-left: 2px; width: 1743px; }
    .tabs { height: 40px; display: flex; align-items: flex-end; border-bottom: 1px solid #adadad; margin-bottom: 1px; }
    .tab { box-sizing: border-box; height: 36px; width: 112px; border: 1px solid #b0b0b0; border-bottom: 0; background: #d2d2d2; border-radius: 3px 3px 0 0; display: flex; align-items: center; padding: 2px 0 0 14px; gap: 10px; letter-spacing: -.05px; }
    .tab svg { margin-top: -2px; }
    .tab.sel { height: 39px; width: 128px; background: #ebebeb; margin-bottom: -1px; border-color: #a6a6a6; letter-spacing: .12px; }
    .status { height: 25px; display: flex; align-items: center; padding: 2px 0 0 2px; letter-spacing: -.1px; box-sizing: border-box; }
    .status .a { flex: 1; }
    .status .b { margin-right: 14px; letter-spacing: .1px; }
  `;
  private cross() { return html`<svg width="11" height="11" viewBox="0 0 11 11"><path d="M1 .5L10 10.5M10 .5L1 10.5" stroke="#222" stroke-width="1.7"/></svg>`; }
  render() {
    return html`
      <app-toolbars></app-toolbars>
      <div class="main">
        <palette-panel></palette-panel>
        <div class="work">
          <div class="tabs"><div class="tab">Untitled${this.cross()}</div><div class="tab sel">large_leap${this.cross()}</div></div>
          <score-canvas></score-canvas>
        </div>
      </div>
      <div class="status"><span class="a">Vertical Frame</span><span class="b">Edit mode</span><span>2:03:000</span></div>
      <task-bar></task-bar>`;
  }
}
